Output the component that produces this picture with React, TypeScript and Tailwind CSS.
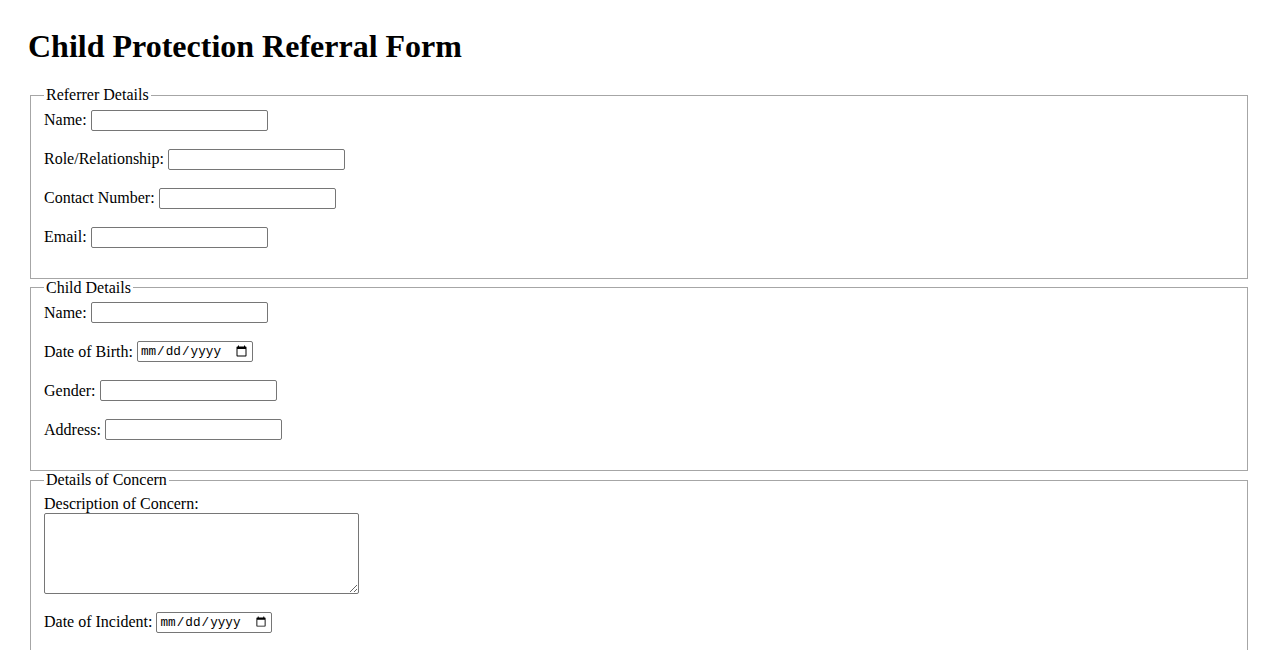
import React from 'react';

type Field = { label: string; type?: 'text' | 'date' | 'email' | 'tel' };

const referrer: Field[] = [
  { label: 'Name:' },
  { label: 'Role/Relationship:' },
  { label: 'Contact Number:', type: 'tel' },
  { label: 'Email:', type: 'email' },
];

const child: Field[] = [
  { label: 'Name:' },
  { label: 'Date of Birth:', type: 'date' },
  { label: 'Gender:' },
  { label: 'Address:' },
];

function Row({ label, type = 'text' }: Field) {
  const isDate = type === 'date';
  return (
    <div className="flex items-center gap-1 h-[21px] mb-[18px]">
      <label className="whitespace-nowrap">{label}</label>
      {isDate ? (
        <input
          type="date"
          className="w-[116px] h-[21px] border border-[#767676] rounded-[2px] bg-white px-[2px] text-[12.7px] [font-family:'Liberation_Mono',monospace]"
        />
      ) : (
        <input
          type={type}
          className="w-[177px] h-[21px] border border-[#767676] rounded-[2px] bg-white px-[2px] py-[1px] text-[13.33px] [font-family:Arial,'Liberation_Sans',sans-serif]"
        />
      )}
    </div>
  );
}

function Group({ title, children }: { title: string; children: React.ReactNode }) {
  return (
    <fieldset className="mx-[2px] border border-[#a6a6a6] px-[13px] pt-[5.6px] pb-[12px]">
      <legend className="px-[2px]">{title}</legend>
      {children}
    </fieldset>
  );
}

export default function App() {
  return (
    <div className="h-screen overflow-hidden bg-white text-black px-[28px] text-[16px] leading-[normal] [font-family:'Liberation_Serif','Times_New_Roman',serif]">
      <h1 className="text-[32px] font-bold mt-[28px] mb-[21px] leading-[normal]">Child Protection Referral Form</h1>
      <form>
        <Group title="Referrer Details">
          {referrer.map((f) => (
            <Row key={f.label} {...f} />
          ))}
        </Group>
        <Group title="Child Details">
          {child.map((f) => (
            <Row key={f.label} {...f} />
          ))}
        </Group>
        <Group title="Details of Concern">
          <label className="block">Description of Concern:</label>
          <textarea className="block w-[315px] h-[81px] border border-[#767676] rounded-[2px] bg-white mb-[18px] resize" />
          <Row label="Date of Incident:" type="date" />
        </Group>
      </form>
    </div>
  );
}
